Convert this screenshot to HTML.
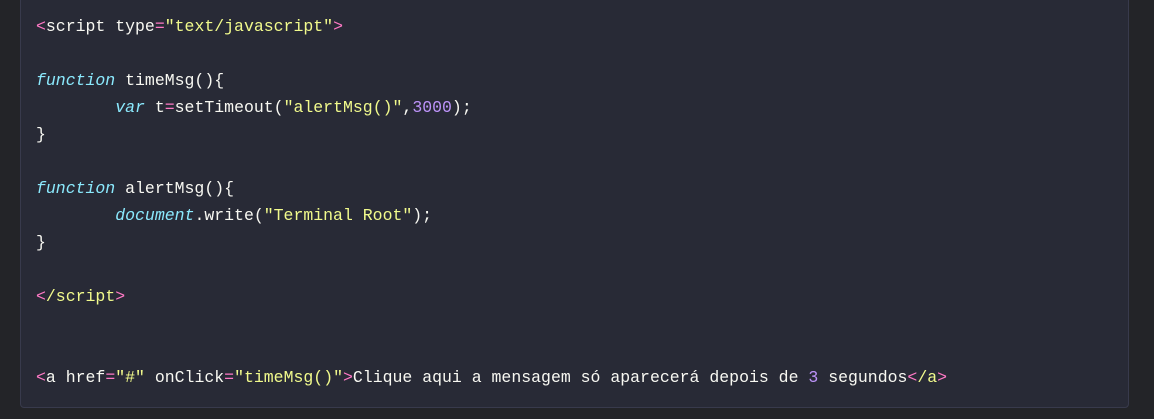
<!DOCTYPE html>
<html><head><meta charset="utf-8"><style>
html,body{margin:0;padding:0;background:#232428;width:1154px;height:419px;overflow:hidden}
.box{position:absolute;left:20px;top:-10px;width:1107px;height:416px;background:#282a36;border:1px solid #383a4c;border-radius:4px}
pre{position:absolute;left:36px;top:13px;margin:0;font-family:"Liberation Mono",monospace;font-size:16.5px;line-height:27px;color:#f8f8f2;tab-size:8;white-space:pre}
.p{color:#ff79c6}.y{color:#f1fa8c}.c{color:#8be9fd;font-style:italic}.n{color:#bd93f9}
</style></head><body>
<div class="box"></div>
<pre><span class="p">&lt;</span>script type<span class="p">=</span><span class="y">"text/javascript"</span><span class="p">&gt;</span>

<span class="c">function</span> timeMsg(){
        <span class="c">var</span> t<span class="p">=</span>setTimeout(<span class="y">"alertMsg()"</span>,<span class="n">3000</span>);
}

<span class="c">function</span> alertMsg(){
        <span class="c">document</span>.write(<span class="y">"Terminal Root"</span>);
}

<span class="p">&lt;</span><span class="y">/script</span><span class="p">&gt;</span>


<span class="p">&lt;</span>a href<span class="p">=</span><span class="y">"#"</span> onClick<span class="p">=</span><span class="y">"timeMsg()"</span><span class="p">&gt;</span>Clique aqui a mensagem só aparecerá depois de <span class="n">3</span> segundos<span class="p">&lt;</span><span class="y">/a</span><span class="p">&gt;</span></pre>
</body></html>
